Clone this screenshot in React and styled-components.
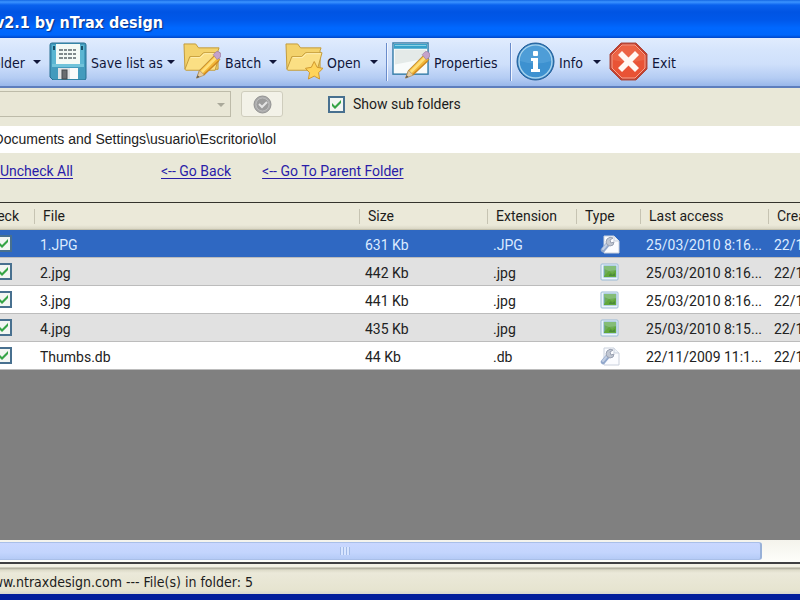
import React from 'react';
import styled, { createGlobalStyle } from 'styled-components';

const uiFont = '"DejaVu Sans Condensed", "Noto Sans", sans-serif';
const gridFont = 'Roboto, "Liberation Sans", Arial, sans-serif';
const pathFont = '"Liberation Sans", Arial, sans-serif';

const GlobalStyle = createGlobalStyle`
  *, *::before, *::after { box-sizing: border-box; }
  body { margin: 0; background: #ece9d8; overflow: hidden; }
`;

const Window = styled.div`
  display: flex;
  flex-direction: column;
  height: 100vh;
  overflow: hidden;
  background: #e9e8d8;
  color: #1c1c1c;
  font: 14px/20px ${gridFont};
  white-space: nowrap;
`;

const ClippedStart = styled.div`
  display: flex;
  justify-content: flex-end;
  width: ${(p) => p.$width}px;
  flex: none;
`;

const TitleBar = styled.header`
  display: flex;
  align-items: center;
  flex: none;
  height: 38px;
  padding-top: 8px;
  background: linear-gradient(#1467e4 0, #3c94ff 2px, #0a62ee 5px, #0054e3 12px, #0058ea 20px, #0068ff 28px, #0066fb 35px, #0046c8 38px);
`;

const Title = styled.h1`
  margin: 0;
  color: #fff;
  font: bold 16px/24px ${uiFont};
  text-shadow: 1px 1px 1px #0a2f86;
`;

const Toolbar = styled.nav`
  display: flex;
  align-items: center;
  flex: none;
  height: 50px;
  border-bottom: 2px solid #5d7ebd;
  background: linear-gradient(#e1ecfe 0, #d6e5fc 12px, #cfe0fb 26px, #b4ccf3 40px, #98b7ea 48px);
`;

const Tool = styled.button`
  display: flex;
  align-items: center;
  justify-content: ${(p) => (p.$clipped ? 'flex-end' : 'flex-start')};
  flex: none;
  gap: 4px;
  width: ${(p) => p.$width}px;
  height: 44px;
  padding: 0 0 2px;
  border: 0;
  background: none;
  color: #10163a;
  font: 14px/20px ${uiFont};
  white-space: nowrap;
`;

const ToolText = styled.span`
  padding-top: 3px;
`;

const Arrow = styled.span`
  flex: none;
  margin-left: ${(p) => (p.$near ? '4px' : 'auto')};
  margin-right: ${(p) => (p.$disabled ? 5 : 8)}px;
  margin-top: 2px;
  border: 4px solid transparent;
  border-top-color: ${(p) => (p.$disabled ? '#aaa99a' : '#10163a')};
  border-bottom: 0;
`;

const Separator = styled.span`
  flex: none;
  width: 2px;
  height: 38px;
  margin-right: 4px;
  border-left: 1px solid #6a8ccb;
  border-right: 1px solid #f1f6ff;
`;

const FilterBar = styled.div`
  display: flex;
  align-items: center;
  flex: none;
  height: 38px;
  padding-bottom: 6px;
`;

const Combo = styled.button`
  display: flex;
  align-items: center;
  justify-content: flex-end;
  width: 231px;
  height: 26px;
  padding: 0;
  border: 1px solid #bdbba9;
  border-left: 0;
  background: #e9e7d6;
`;

const ApplyButton = styled.button`
  display: grid;
  place-items: center;
  width: 42px;
  height: 26px;
  margin: 0 45px 0 10px;
  padding: 0;
  border: 1px solid #cfcdbd;
  border-radius: 3px;
  background: #f3f2e8;
`;

const CheckLabel = styled.label`
  display: flex;
  align-items: center;
  gap: 8px;
`;

const CheckFrame = styled.span`
  display: grid;
  flex: none;
  width: 17px;
  height: 17px;
  > * { grid-area: 1 / 1; }
  > svg { pointer-events: none; margin: 1px; }
`;

const CheckInput = styled.input`
  appearance: none;
  width: 17px;
  height: 17px;
  margin: 0;
  border: 2px solid #48708f;
  background: #f3f6f2;
`;

const PathBar = styled.div`
  flex: none;
  height: 27px;
  padding: 3px 0 4px;
  background: #fff;
  color: #222;
  font-family: ${pathFont};
`;

const LinkBar = styled.div`
  display: flex;
  flex: none;
  height: 49px;
  padding-top: 8px;
`;

const TextLink = styled.a`
  margin-left: ${(p) => p.$gap || 0}px;
  color: #2a1ca8;
  text-underline-offset: 2px;
`;

const ListPanel = styled.main`
  flex: 1;
  min-height: 0;
  overflow: hidden;
  border-top: 1px solid #34332c;
  background: #808080;
`;

const FileTable = styled.table`
  width: 100%;
  table-layout: fixed;
  border-collapse: separate;
  border-spacing: 0;
`;

const Col = styled.col`
  width: ${(p) => p.$width}px;
`;

const HeadCell = styled.th`
  height: 27px;
  padding: 0 0 0 ${(p) => (p.$first ? 0 : 9)}px;
  border-bottom: 1px solid #c2bfab;
  background:
    linear-gradient(#c6c3b2, #c6c3b2) 0 6px / ${(p) => (p.$first ? 0 : 1)}px 15px no-repeat,
    linear-gradient(#ebe9d9 0, #ebe9d9 22px, #d5d2c0 27px);
  font-weight: normal;
  text-align: left;
`;

const Row = styled.tr`
  background: ${(p) => (p.$selected ? '#2f68c2' : p.$shaded ? '#e1e1e1' : '#fff')};
  color: ${(p) => (p.$selected ? '#dcebff' : '#222')};
`;

const Cell = styled.td`
  height: 28px;
  padding: ${(p) => (p.$first ? '0' : '2px 0 0 6px')};
  border-bottom: 1px solid #bcbcbc;
`;

const IconCell = styled(Cell)`
  padding: 2px 0 0 24px;
  svg { display: block; }
`;

const CheckCell = styled(ClippedStart)`
  padding-right: ${(p) => p.$end}px;
`;

const ScrollTrack = styled.div`
  display: flex;
  flex: none;
  height: 22px;
  padding: 2px 38px 2px 0;
  background: linear-gradient(#f4f3ec, #fefefa);
`;

const ScrollThumb = styled.div`
  display: flex;
  align-items: center;
  justify-content: center;
  flex: 1;
  padding-right: 70px;
  border: 1px solid #a9bfe8;
  border-left: 0;
  border-right: 2px solid #98b1d8;
  border-radius: 0 3px 3px 0;
  background: linear-gradient(#c9d7ff, #c3d5fd 60%, #b5cbf6);
`;

const Grip = styled.span`
  width: 10px;
  height: 8px;
  background: repeating-linear-gradient(90deg, #a3bbe8 0, #a3bbe8 1px, #d8e5ff 1px, #d8e5ff 3px);
`;

const StatusBar = styled.footer`
  flex: none;
  height: 38px;
  padding-top: 4px;
  border-top: 2px solid #3f3f42;
  border-bottom: 6px solid #001d9c;
  background: linear-gradient(#f4f2e6 0, #f4f2e6 3px, #aaa797 4px, #dddbc9 6px, #ebe9d9 9px, #e6e4d0 26px, #d5d5cf 30px);
  font: 14px/28px ${uiFont};
`;

function SaveIcon() {
  return (
    <svg width="38" height="38" viewBox="0 0 38 38">
      <path d="M3 1h32q2 0 2 2v33q0 2-2 2H4l-3-3V3q0-2 2-2z" fill="#439bbd" stroke="#266f91" />
      <path d="M3 3h5v22H3zM31 3h4v22h-4z" fill="#5bb6d2" />
      <path d="M4 4h2v4H4zM32 4h2v4h-2z" fill="#194e68" />
      <rect x="7" y="2" width="24" height="20" fill="#f4faf6" />
      <path d="M10 8h18M10 12h18M10 16h18" stroke="#59666a" strokeWidth="1.5" strokeDasharray="4 1 3 1" />
      <path d="M3 22h32v3H3z" fill="#70c3da" />
      <rect x="9" y="26" width="20" height="11" fill="#e0e2e5" />
      <path d="M21 26h8v11h-8z" fill="#fafafa" />
      <rect x="13" y="28" width="5" height="9" fill="#686c70" stroke="#42494e" />
    </svg>
  );
}

function PencilShape() {
  return (
    <g>
      <path d="M14 37l3-8 16-16 5 5-16 15z" fill="#f2b637" stroke="#a87a30" strokeWidth=".8" />
      <path d="M18 30l15-15 2 2-15 15z" fill="#ffdf79" />
      <path d="M21 33l15-14 1 1-15 14z" fill="#d08920" />
      <path d="M31 13l3-3q2-1 4 1t0 5l-3 2z" fill="#c4a3cb" stroke="#9a7ca7" strokeWidth=".7" />
      <path d="M14 37l3-8 5 5z" fill="#e7cc9f" stroke="#a08350" strokeWidth=".6" />
      <path d="M14 37l1-3 2 2z" fill="#555" />
    </g>
  );
}

function FolderShape() {
  return (
    <g stroke="#c29a3a" strokeLinejoin="round">
      <path d="M1 2h12l3 4h21l-1 3v19H2z" fill="#f3d26c" />
      <path d="M2 28l5-13h10l4-4h17l-5 18H3z" fill="#fbdf84" />
      <path d="M8 16h10l4-4h15" fill="none" stroke="#fff0b5" />
    </g>
  );
}

function BatchIcon() {
  return (
    <svg width="38" height="38" viewBox="0 0 39 39">
      <FolderShape />
      <PencilShape />
    </svg>
  );
}

function OpenIcon() {
  return (
    <svg width="38" height="38" viewBox="0 0 39 39">
      <FolderShape />
      <path d="M30 20l3 6 6 1-4.500 4.500 1 6.500-5.500-3-6 3 1.200-6.500L21 27l6-1z" fill="#ffd45a" stroke="#ce962d" strokeLinejoin="round" />
    </svg>
  );
}

function PropertiesIcon() {
  return (
    <svg width="38" height="38" viewBox="0 0 39 39">
      <rect x="1" y="1" width="36" height="32" fill="#f8fbfa" stroke="#397faa" strokeWidth="1.5" />
      <path d="M2 2h34v5H2z" fill="#37a1c9" />
      <path d="M3 3h32v1H3z" fill="#8bd1e5" />
      <path d="M3 8h32v9L3 23z" fill="#d8e1df" opacity=".65" />
      <PencilShape />
    </svg>
  );
}

function InfoIcon() {
  return (
    <svg width="39" height="39" viewBox="0 0 39 39">
      <circle cx="19.500" cy="19.500" r="18.500" fill="#2b76b7" stroke="#225e98" />
      <circle cx="19.500" cy="19.500" r="16.500" fill="#3d91d0" stroke="#a6d3ee" strokeWidth="1.500" />
      <path d="M4 19a15.500 15.500 0 0 1 31 0q-15 5-31 0z" fill="#5da8dc" opacity=".55" />
      <rect x="17" y="9" width="5" height="5" rx="1" fill="#fff" />
      <path d="M15 16h7v11h2v3h-9v-3h2v-8h-2z" fill="#fff" />
    </svg>
  );
}

function ExitIcon() {
  return (
    <svg width="39" height="39" viewBox="0 0 39 39">
      <path d="M12 1h15l11 11v15L27 38H12L1 27V12z" fill="#c6402d" stroke="#a94c43" />
      <path d="M13 3h13l10 10v13L26 36H13L3 26V13z" fill="#e95335" stroke="#f6a48f" />
      <path d="M13 4h13l9 9v5q-15 4-31 0v-5z" fill="#f07556" opacity=".5" />
      <path d="M13 9l6.500 6.500L26 9l4 4-6.500 6.500L30 26l-4 4-6.500-6.500L13 30l-4-4 6.500-6.500L9 13z" fill="#fff8f3" />
    </svg>
  );
}

function TickIcon() {
  return (
    <svg width="15" height="15" viewBox="0 0 15 15">
      <path d="M3 6l3 3 6-6v3l-6 6-3-3z" fill="#35a445" />
    </svg>
  );
}

function ApplyIcon() {
  return (
    <svg width="19" height="19" viewBox="0 0 19 19">
      <circle cx="9.500" cy="9.500" r="8.500" fill="#aaa" stroke="#929292" />
      <circle cx="9.500" cy="9.500" r="6.500" fill="#9c9c9c" stroke="#bbb" />
      <path d="M6 9l3 3 5-5" fill="none" stroke="#e4e4e4" strokeWidth="2" />
    </svg>
  );
}

function PictureIcon() {
  return (
    <svg width="19" height="19" viewBox="0 0 19 19">
      <rect x="1" y="1" width="17" height="16" rx="1" fill="#edf5fa" stroke="#99b9d6" />
      <rect x="4" y="3" width="12" height="11" fill="#6fac58" stroke="#79acd0" />
      <path d="M4 3h12v4L9 8 4 6z" fill="#84bd78" />
      <path d="M4 13l5-5 3 2 4-3v7H4z" fill="#62a83b" />
      <path d="M9 12l2-2 1 2 3-2v3H9z" fill="#4b8b3c" />
    </svg>
  );
}

function WrenchFileIcon() {
  return (
    <svg width="20" height="19" viewBox="0 0 20 19">
      <path d="M4 1h10l5 5v12H4z" fill="#fbfcff" stroke="#c9d0dc" />
      <path d="M14 1v5h5" fill="#eef2f8" stroke="#c9d0dc" />
      <path d="M3 15l5-6" stroke="#92a8cc" strokeWidth="4.500" strokeLinecap="round" />
      <path d="M3 14l5-6" stroke="#c2cfe4" strokeWidth="2" strokeLinecap="round" />
      <path d="M7 4q3-3 6-1l-3 2 1 3 3-1q0 4-4 4-4-1-4-4z" fill="#c1c7d2" stroke="#99a1b2" />
    </svg>
  );
}

function Checkbox(props) {
  return (
    <CheckFrame>
      <CheckInput type="checkbox" defaultChecked {...props} />
      <TickIcon />
    </CheckFrame>
  );
}

const columns = ['File', 'Size', 'Extension', 'Type', 'Last access', 'Crea'];

const files = [
  { name: '1.JPG', size: '631 Kb', ext: '.JPG', access: '25/03/2010 8:16...', selected: true },
  { name: '2.jpg', size: '442 Kb', ext: '.jpg', access: '25/03/2010 8:16...', picture: true },
  { name: '3.jpg', size: '441 Kb', ext: '.jpg', access: '25/03/2010 8:16...', picture: true },
  { name: '4.jpg', size: '435 Kb', ext: '.jpg', access: '25/03/2010 8:15...', picture: true },
  { name: 'Thumbs.db', size: '44 Kb', ext: '.db', access: '22/11/2009 11:1...' },
];

export default function App() {
  return (
    <Window>
      <GlobalStyle />
      <TitleBar>
        <ClippedStart $width={163}><Title>v2.1 by nTrax design</Title></ClippedStart>
      </TitleBar>

      <Toolbar>
        <Tool $width={49} $clipped><ToolText>older</ToolText><Arrow $near /></Tool>
        <Tool $width={134}><SaveIcon /><ToolText>Save list as</ToolText><Arrow /></Tool>
        <Tool $width={102}><BatchIcon /><ToolText>Batch</ToolText><Arrow /></Tool>
        <Tool $width={101}><OpenIcon /><ToolText>Open</ToolText><Arrow /></Tool>
        <Separator />
        <Tool $width={118}><PropertiesIcon /><ToolText>Properties</ToolText></Tool>
        <Separator />
        <Tool $width={93}><InfoIcon /><ToolText>Info</ToolText><Arrow /></Tool>
        <Tool $width={72}><ExitIcon /><ToolText>Exit</ToolText></Tool>
      </Toolbar>

      <FilterBar>
        <Combo type="button" aria-label="Filter" disabled><Arrow $disabled /></Combo>
        <ApplyButton type="button" aria-label="Apply" disabled><ApplyIcon /></ApplyButton>
        <CheckLabel><Checkbox />Show sub folders</CheckLabel>
      </FilterBar>

      <PathBar>
        <ClippedStart $width={276}>Documents and Settings\usuario\Escritorio\lol</ClippedStart>
      </PathBar>

      <LinkBar>
        <ClippedStart $width={73}><TextLink href="#uncheck">Uncheck All</TextLink></ClippedStart>
        <TextLink href="#back" $gap={88}>&lt;-- Go Back</TextLink>
        <TextLink href="#parent" $gap={31}>&lt;-- Go To Parent Folder</TextLink>
      </LinkBar>

      <ListPanel>
        <FileTable>
          <colgroup>
            <Col $width={34} />
            <col />
            <Col $width={128} />
            <Col $width={89} />
            <Col $width={64} />
            <Col $width={128} />
            <Col $width={32} />
          </colgroup>
          <thead>
            <tr>
              <HeadCell $first scope="col"><CheckCell $width={34} $end={15}>eck</CheckCell></HeadCell>
              {columns.map((c) => <HeadCell key={c} scope="col">{c}</HeadCell>)}
            </tr>
          </thead>
          <tbody>
            {files.map((f, i) => (
              <Row key={f.name} $selected={f.selected} $shaded={i % 2 === 1}>
                <Cell $first>
                  <CheckCell $width={34} $end={22}><Checkbox aria-label={f.name} /></CheckCell>
                </Cell>
                <Cell>{f.name}</Cell>
                <Cell>{f.size}</Cell>
                <Cell>{f.ext}</Cell>
                <IconCell>{f.picture ? <PictureIcon /> : <WrenchFileIcon />}</IconCell>
                <Cell>{f.access}</Cell>
                <Cell>22/1</Cell>
              </Row>
            ))}
          </tbody>
        </FileTable>
      </ListPanel>

      <ScrollTrack>
        <ScrollThumb><Grip /></ScrollThumb>
      </ScrollTrack>

      <StatusBar>
        <ClippedStart $width={253}>ww.ntraxdesign.com --- File(s) in folder: 5</ClippedStart>
      </StatusBar>
    </Window>
  );
}
